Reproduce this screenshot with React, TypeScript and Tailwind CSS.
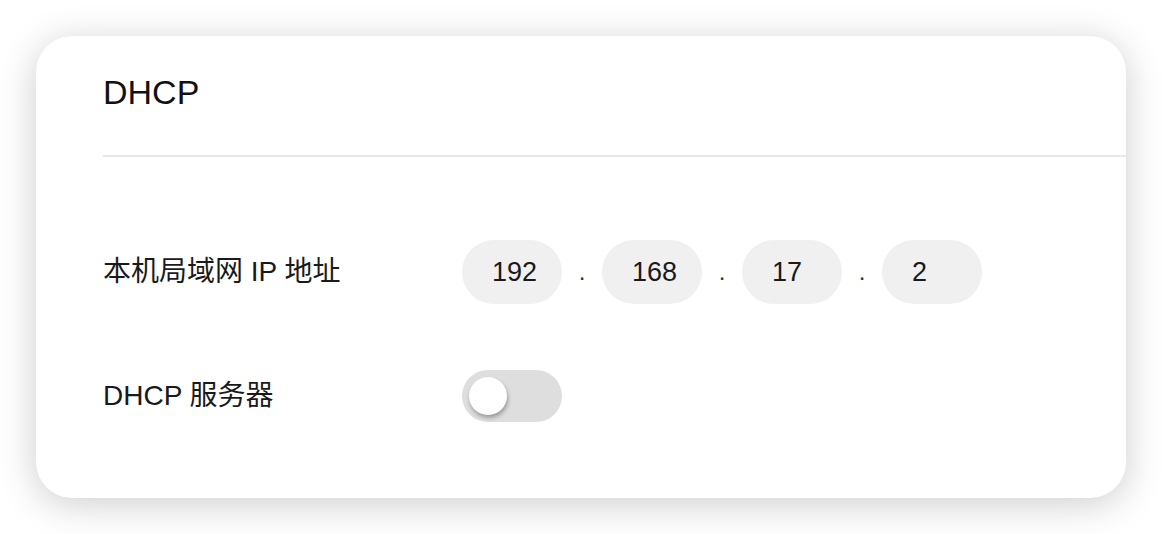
import { useState } from 'react';

// Octets of the LAN address
const octets = ['192', '168', '17', '2'];

const font = 'font-["Liberation_Sans","Noto_Sans_CJK_SC",sans-serif]';

function Toggle({ on, onChange }: { on: boolean; onChange: (v: boolean) => void }) {
    return (
        <button
            type="button"
            onClick={() => onChange(!on)}
            className={`w-[100px] h-[52px] rounded-full flex items-center px-[7px] ${
                on ? 'bg-[#34c759] justify-end' : 'bg-[#dedede] justify-start'
            }`}
        >
            <span className="block w-[38px] h-[38px] rounded-full bg-white shadow-[1px_3px_4px_rgba(0,0,0,0.3)]" />
        </button>
    );
}

export default function App() {
    const [dhcpOn, setDhcpOn] = useState(false);

    return (
        <div className={`min-h-screen bg-white p-[36px] ${font}`}>
            <div className="w-full h-[462px] bg-white rounded-[36px] shadow-[0_6px_38px_rgba(0,0,0,0.2)] pl-[67px] overflow-hidden">
                {/* Header */}
                <div className="pt-[37px] pb-[44px] border-b-2 border-[#e8e8e8]">
                    <h1 className="text-[34px] leading-[38px] text-[#111]">DHCP</h1>
                </div>

                {/* LAN IP row */}
                <div className="mt-[83px] h-[64px] flex items-center">
                    <div className="w-[359px] text-[28px] text-[#1a1a1a]">本机局域网 IP 地址</div>
                    <div className="flex items-center">
                        {octets.map((o, i) => (
                            <div key={i} className="flex items-center">
                                {i > 0 && (
                                    <span className="w-[40px] text-center text-[24px] text-[#333]">.</span>
                                )}
                                <input
                                    readOnly
                                    value={o}
                                    className="w-[100px] h-[64px] rounded-full bg-[#f0f0f0] pl-[30px] text-[27px] text-[#1a1a1a] outline-none"
                                />
                            </div>
                        ))}
                    </div>
                </div>

                {/* DHCP server row */}
                <div className="mt-[66px] h-[52px] flex items-center">
                    <div className="w-[359px] text-[28px] text-[#1a1a1a]">DHCP 服务器</div>
                    <Toggle on={dhcpOn} onChange={setDhcpOn} />
                </div>
            </div>
        </div>
    );
}
